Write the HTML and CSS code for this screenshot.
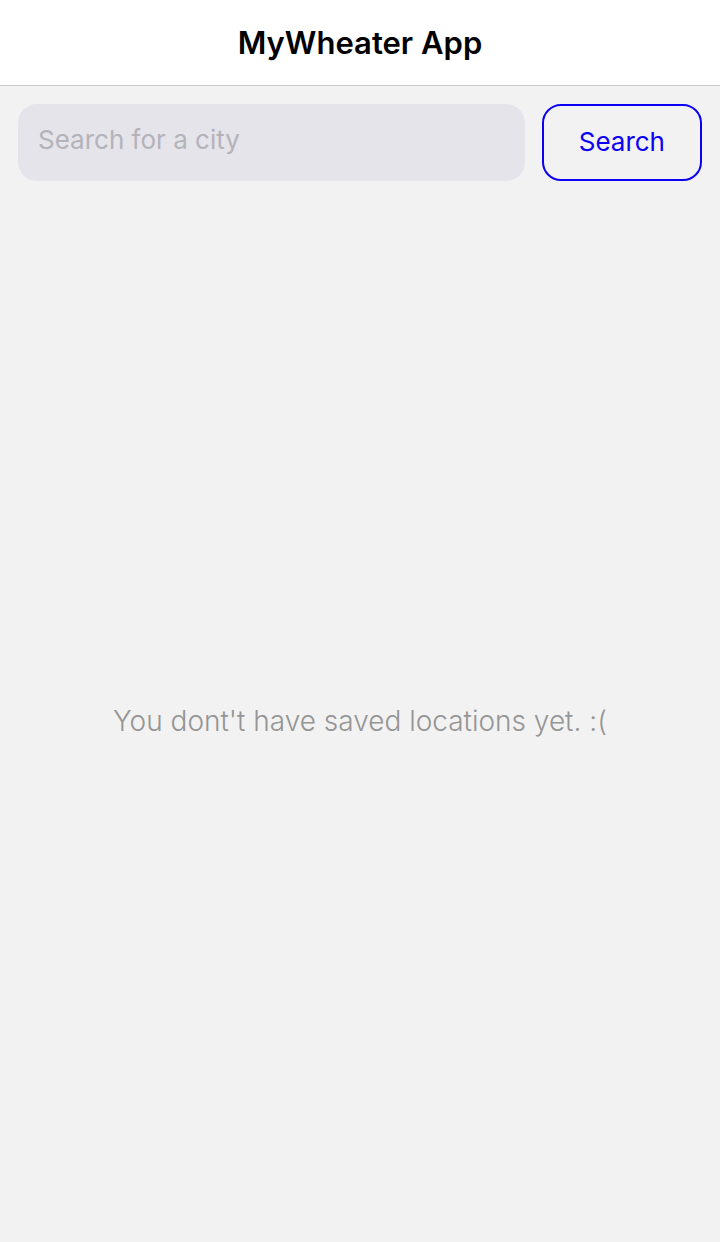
FILE: index.html
```html
<!DOCTYPE html>
<html lang="en">
<head>
<meta charset="utf-8">
<meta name="viewport" content="width=device-width, initial-scale=1">
<title>MyWheater App</title>
<link rel="stylesheet" href="styles.css">
</head>
<body>
<header class="header"><h1 class="title">MyWheater App</h1></header>
<form class="search">
<input class="search-input" type="text" aria-label="Search for a city" placeholder="Search for a city">
<button class="search-button" type="button">Search</button>
</form>
<main class="content"><p class="empty">You dont't have saved locations yet. :(</p></main>
</body>
</html>
```

FILE: styles.css
```css
* {
  box-sizing: border-box;
}

body {
  display: flex;
  flex-direction: column;
  min-height: 100vh;
  margin: 0;
  background: #f2f2f2;
  font-family: Inter, "Liberation Sans", sans-serif;
}

.header {
  padding: 23px 16px 22px;
  border-bottom: 1px solid #cacaca;
  background: #fff;
  text-align: center;
}

.title {
  margin: 0;
  color: #000;
  font-size: 31px;
  font-weight: 600;
  line-height: 40px;
}

.search {
  display: flex;
  gap: 17px;
  padding: 18px;
}

.search-input {
  flex: 1;
  min-width: 0;
  height: 77px;
  padding: 0 20px 6px;
  border: 0;
  border-radius: 19px;
  background: #e5e4ea;
  color: #000;
  font-family: inherit;
  font-size: 26px;
}

.search-input::placeholder {
  color: #b4b3b9;
  opacity: 1;
}

.search-button {
  height: 77px;
  padding: 0 35px 2px;
  border: 2px solid #0c00f4;
  border-radius: 19px;
  background: transparent;
  color: #0c00f4;
  font-family: inherit;
  font-size: 26px;
}

.content {
  display: flex;
  flex: 1;
  align-items: center;
  justify-content: center;
}

.empty {
  margin: 0;
  color: #959595;
  font-size: 28px;
  font-weight: 300;
  line-height: 36px;
}
```
